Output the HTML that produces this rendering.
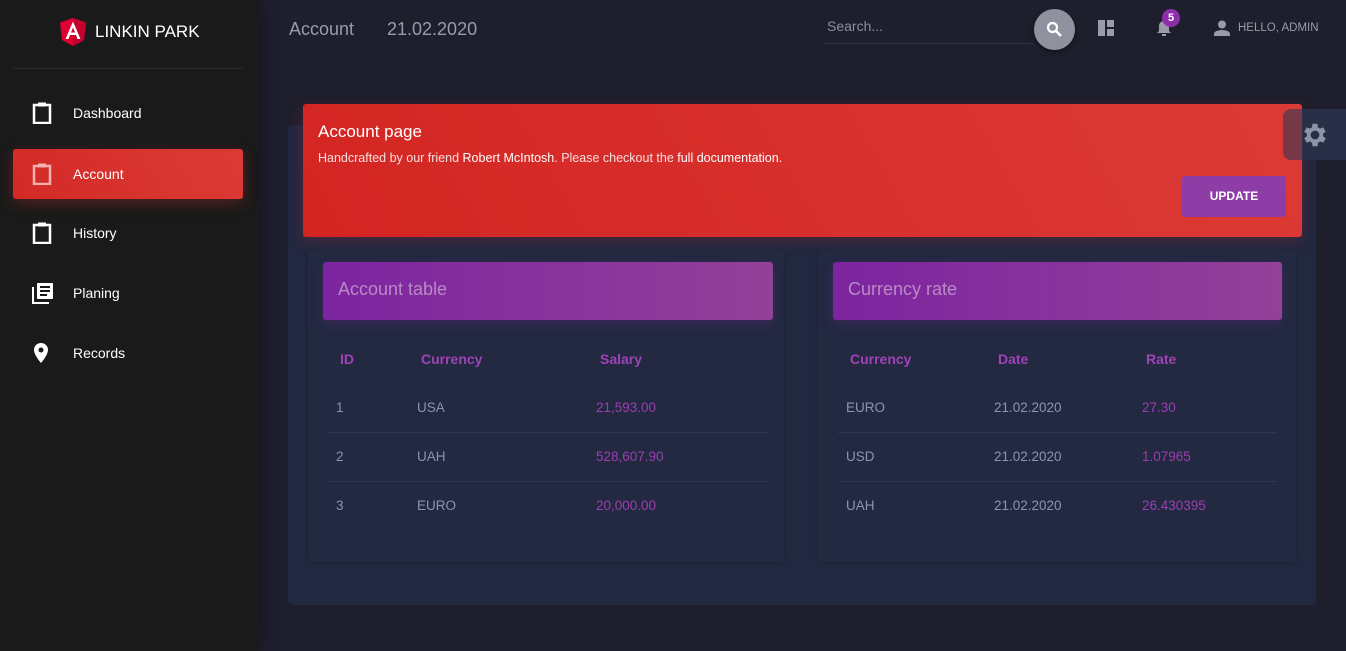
<!DOCTYPE html>
<html><head><style>
*{box-sizing:border-box;margin:0;padding:0}
body{width:1346px;height:651px;overflow:hidden;background:#1e1e2d;font-family:"Liberation Sans",sans-serif;position:relative}
.side{position:absolute;left:0;top:0;width:258px;height:651px;background:#1a1a1a;box-shadow:0 0 20px rgba(0,0,0,.4)}
.logo{position:absolute;left:60px;top:18px;display:flex;align-items:center;color:#fff;font-size:17px}
.hr{position:absolute;left:13px;width:230px;top:68px;height:1px;background:#2c2c2c}
.nav{position:absolute;left:13px;width:230px;height:50px;display:flex;align-items:center;color:#fff;font-size:14px;border-radius:3px}
.nav svg{position:absolute;left:19px}
.nav span{position:absolute;left:60px}
.act{background:linear-gradient(60deg,#d32a26,#dc3a36);box-shadow:0 4px 15px rgba(220,50,50,.3)}
.top{position:absolute;color:#9a9aa8}
.a{position:absolute;}
.card{position:absolute;background:#212840;border-radius:4px}
.th{position:absolute;color:#a042b8;font-weight:bold;font-size:14px}
.td{position:absolute;color:#8c95ad;font-size:13.5px}
.pv{color:#9c3fb0}
.line{position:absolute;height:1px;background:#2f3750}
</style></head><body>
<div class="side">
 <div class="logo"><svg width="26" height="28" viewBox="0 0 26 28"><path d="M13 0L0 4.5 2 22 13 28 24 22 26 4.5z" fill="#dd0031"/><path d="M13 0L26 4.5 24 22 13 28z" fill="#c3002f"/><path d="M13 3.5L5.5 21h3l1.5-4h6l1.5 4h3zM11 14.5l2-5 2 5z" fill="#fff"/></svg><span style="margin-left:9px">LINKIN PARK</span></div>
 <div class="hr"></div>
 <div class="nav" style="top:88px"><svg width="20" height="22" viewBox="0 0 20 22"><path d="M2 3h16v18H2z" fill="none" stroke="#fff" stroke-width="2.5"/><rect x="6" y="0.5" width="8" height="4" fill="#fff"/></svg><span>Dashboard</span></div>
 <div class="nav act" style="top:149px"><svg width="20" height="22" viewBox="0 0 20 22"><path d="M2 3h16v18H2z" fill="none" stroke="#f3b0ae" stroke-width="2.5"/><rect x="6" y="0.5" width="8" height="4" fill="#f3b0ae"/></svg><span>Account</span></div>
 <div class="nav" style="top:208px"><svg width="20" height="22" viewBox="0 0 20 22"><path d="M2 3h16v18H2z" fill="none" stroke="#fff" stroke-width="2.5"/><rect x="6" y="0.5" width="8" height="4" fill="#fff"/></svg><span>History</span></div>
 <div class="nav" style="top:268px"><svg width="22" height="22" viewBox="0 0 22 22"><path d="M1 5v16h16" fill="none" stroke="#fff" stroke-width="2"/><rect x="5" y="1" width="16" height="16" rx="1" fill="#fff"/><path d="M8 5h10M8 9h10M8 13h7" stroke="#1a1a1a" stroke-width="2"/></svg><span>Planing</span></div>
 <div class="nav" style="top:328px"><svg width="18" height="22" viewBox="0 0 18 22"><path d="M9 1a7 7 0 0 0-7 7c0 5 7 13 7 13s7-8 7-13a7 7 0 0 0-7-7z" fill="#fff"/><circle cx="9" cy="8" r="2.5" fill="#1a1a1a"/></svg><span>Records</span></div>
</div>
<div class="top" style="left:289px;top:19px;font-size:18px">Account</div>
<div class="top" style="left:387px;top:19px;font-size:18px">21.02.2020</div>
<div class="top" style="left:827px;top:18px;font-size:14px;color:#8e8e9c">Search...</div>
<div class="a" style="left:825px;top:43px;width:208px;height:1px;background:#34344a"></div>
<div class="a" style="left:1034px;top:9px;width:41px;height:41px;border-radius:50%;background:#8e929e;box-shadow:0 2px 6px rgba(0,0,0,.4)"><svg style="position:absolute;left:12px;top:12px" width="17" height="17" viewBox="0 0 17 17"><circle cx="6.5" cy="6.5" r="4.5" fill="none" stroke="#fff" stroke-width="2.2"/><path d="M10 10l5 5" stroke="#fff" stroke-width="2.6"/></svg></div>
<svg class="a" style="left:1098px;top:20px" width="16" height="16" viewBox="0 0 16 16" fill="#9a9aa8"><rect x="0" y="0" width="7" height="16"/><rect x="9" y="0" width="7" height="7"/><rect x="9" y="9" width="7" height="7"/></svg>
<svg class="a" style="left:1156px;top:18px" width="16" height="18" viewBox="0 0 16 18" fill="#9a9aa8"><path d="M8 1a1 1 0 0 1 1 1v1a5 5 0 0 1 4 5v5l2 2H1l2-2V8a5 5 0 0 1 4-5V2a1 1 0 0 1 1-1z"/><rect x="6" y="16" width="4" height="2"/></svg>
<div class="a" style="left:1162px;top:9px;width:18px;height:18px;border-radius:50%;background:#8e2ea8;color:#fff;font-size:11px;font-weight:bold;text-align:center;line-height:18px">5</div>
<svg class="a" style="left:1214px;top:20px" width="16" height="16" viewBox="0 0 16 16" fill="#9a9aa8"><circle cx="8" cy="4.5" r="4"/><path d="M0 16v-2c0-3 5-4 8-4s8 1 8 4v2z"/></svg>
<div class="top" style="left:1238px;top:22px;font-size:11.5px">HELLO, ADMIN</div>

<div class="card" style="left:288px;top:125px;width:1028px;height:480px"></div>

<div class="a" style="left:303px;top:104px;width:999px;height:133px;background:linear-gradient(60deg,#d32522,#dc3a36);border-radius:3px;box-shadow:0 4px 15px rgba(200,40,40,.25)">
 <div style="position:absolute;left:15px;top:18px;color:#fff;font-size:17px">Account page</div>
 <div style="position:absolute;left:15px;top:47px;color:#f8dede;font-size:12.5px">Handcrafted by our friend <span style="color:#fff">Robert McIntosh</span>. Please checkout the <span style="color:#fff">full documentation.</span></div>
 <div style="position:absolute;left:879px;top:72px;width:104px;height:41px;background:#8e3ca6;border-radius:3px;color:#fff;font-size:12px;font-weight:bold;text-align:center;line-height:41px">UPDATE</div>
</div>

<div class="a" style="left:1283px;top:109px;width:63px;height:51px;border-radius:8px 0 0 8px;background:rgba(50,56,84,.6)"></div>
<div class="a" style="left:1302px;top:109px;width:44px;height:51px;background:#283048"></div>
<svg class="a" style="left:1300px;top:120px" width="30" height="30" viewBox="0 0 24 24" fill="#8e94a8"><path d="M19.4 13a7.5 7.5 0 0 0 0-2l2.1-1.6-2-3.5-2.5 1a7 7 0 0 0-1.7-1L15 3h-4l-.4 2.9a7 7 0 0 0-1.7 1l-2.5-1-2 3.5L6.6 11a7.5 7.5 0 0 0 0 2l-2.2 1.6 2 3.5 2.5-1a7 7 0 0 0 1.7 1L11 21h4l.4-2.9a7 7 0 0 0 1.7-1l2.5 1 2-3.5zM13 15.5a3.5 3.5 0 1 1 0-7 3.5 3.5 0 0 1 0 7z" transform="translate(-1 0)"/></svg>

<div class="card" style="left:308px;top:250px;width:476px;height:312px;background:#222941;box-shadow:0 1px 4px rgba(0,0,0,.2)"></div>
<div class="a" style="left:323px;top:262px;width:450px;height:58px;border-radius:3px;background:linear-gradient(90deg,#7d24a0,#924199);box-shadow:0 4px 12px rgba(120,40,150,.3)"><div style="position:absolute;left:15px;top:17px;color:#b98ac6;font-size:18px">Account table</div></div>
<div class="th" style="left:340px;top:351px">ID</div><div class="th" style="left:421px;top:351px">Currency</div><div class="th" style="left:600px;top:351px">Salary</div>
<div class="td" style="left:336px;top:400px">1</div><div class="td" style="left:417px;top:400px">USA</div><div class="td pv" style="left:596px;top:400px">21,593.00</div>
<div class="line" style="left:328px;top:432px;width:440px"></div>
<div class="td" style="left:336px;top:449px">2</div><div class="td" style="left:417px;top:449px">UAH</div><div class="td pv" style="left:596px;top:449px">528,607.90</div>
<div class="line" style="left:328px;top:481px;width:440px"></div>
<div class="td" style="left:336px;top:498px">3</div><div class="td" style="left:417px;top:498px">EURO</div><div class="td pv" style="left:596px;top:498px">20,000.00</div>

<div class="card" style="left:818px;top:250px;width:478px;height:312px;background:#222941;box-shadow:0 1px 4px rgba(0,0,0,.2)"></div>
<div class="a" style="left:833px;top:262px;width:449px;height:58px;border-radius:3px;background:linear-gradient(90deg,#7d24a0,#924199);box-shadow:0 4px 12px rgba(120,40,150,.3)"><div style="position:absolute;left:15px;top:17px;color:#b98ac6;font-size:18px">Currency rate</div></div>
<div class="th" style="left:850px;top:351px">Currency</div><div class="th" style="left:998px;top:351px">Date</div><div class="th" style="left:1146px;top:351px">Rate</div>
<div class="td" style="left:846px;top:400px">EURO</div><div class="td" style="left:994px;top:400px">21.02.2020</div><div class="td pv" style="left:1142px;top:400px">27.30</div>
<div class="line" style="left:838px;top:432px;width:439px"></div>
<div class="td" style="left:846px;top:449px">USD</div><div class="td" style="left:994px;top:449px">21.02.2020</div><div class="td pv" style="left:1142px;top:449px">1.07965</div>
<div class="line" style="left:838px;top:481px;width:439px"></div>
<div class="td" style="left:846px;top:498px">UAH</div><div class="td" style="left:994px;top:498px">21.02.2020</div><div class="td pv" style="left:1142px;top:498px">26.430395</div>
</body></html>
